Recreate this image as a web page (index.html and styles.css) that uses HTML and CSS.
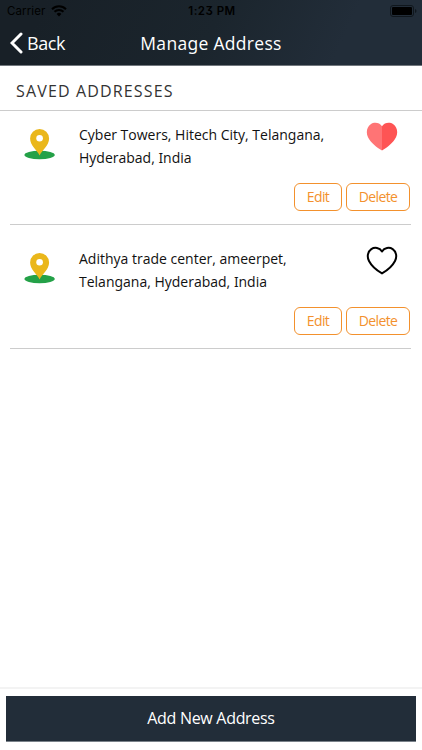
FILE: index.html
```
<!doctype html>
<html lang="en">

<head>
<meta charset="utf-8">
<title>Manage Address</title>
<link rel="stylesheet" href="styles.css">
</head>

<body>

<header class="header">
  <div class="status-bar">
    <div class="carrier">
      <span>Carrier</span>
      <svg class="wifi" width="16" height="12" viewBox="0 0 16 12">
        <path d="M1 4.2a10 10 0 0 1 14 0M3.5 6.8a6.4 6.4 0 0 1 9 0" fill="none" stroke="#000" stroke-width="2"/>
        <path d="M8 11.5 5.6 8.9a3.5 3.5 0 0 1 4.8 0z"/>
      </svg>
    </div>
    <div class="time">1:23 PM</div>
    <svg class="battery" width="27" height="12" viewBox="0 0 27 12">
      <rect x=".5" y=".5" width="23" height="11" rx="2.5" fill="none" stroke="#10171d"/>
      <rect x="2" y="2" width="20" height="8" rx="1"/>
      <path d="M25 4v4q1.5-.5 1.5-2T25 4z" fill="#10171d"/>
    </svg>
  </div>
  <div class="nav">
    <a class="back">
      <svg width="13" height="22" viewBox="0 0 13 22">
        <path d="M11 2 2 11l9 9" fill="none" stroke="#fff" stroke-width="3" stroke-linecap="round"/>
      </svg>
      <span>Back</span>
    </a>
    <h1>Manage Address</h1>
  </div>
</header>

<h2 class="section-title">SAVED ADDRESSES</h2>

<main class="addresses">
  <div class="address">
    <div class="address-info">
      <svg class="pin" width="32" height="32" viewBox="0 0 32 32">
        <ellipse cx="15.6" cy="27" rx="15.2" ry="4.2" fill="#24a148"/>
        <path d="M15.6 27.5C13.4 22.5 6.1 17.5 6.1 10.5a9.5 9.5 0 0 1 19 0C25.1 17.5 17.8 22.5 15.6 27.5z" fill="#eab71b"/>
        <circle cx="15.6" cy="10.3" r="3.3" fill="#fff"/>
      </svg>
      <p>Cyber Towers, Hitech City, Telangana,<br>Hyderabad, India</p>
      <svg class="heart" width="32" height="30" viewBox="0 0 32 30">
        <path d="M16 4.3C13.4.4 8.2-.1 4.7 2.3.8 5-.3 10.7 2 15.3 4.7 20.8 10.8 25.7 16 28.5z" fill="#ff7475"/>
        <path d="M16 4.3C18.6.4 23.8-.1 27.3 2.3 31.2 5 32.3 10.7 30 15.3 27.3 20.8 21.2 25.7 16 28.5z" fill="#fe5454"/>
      </svg>
    </div>
    <div class="actions">
      <button class="edit">Edit</button>
      <button class="delete">Delete</button>
    </div>
  </div>

  <div class="address">
    <div class="address-info">
      <svg class="pin" width="32" height="32" viewBox="0 0 32 32">
        <ellipse cx="15.6" cy="27" rx="15.2" ry="4.2" fill="#24a148"/>
        <path d="M15.6 27.5C13.4 22.5 6.1 17.5 6.1 10.5a9.5 9.5 0 0 1 19 0C25.1 17.5 17.8 22.5 15.6 27.5z" fill="#eab71b"/>
        <circle cx="15.6" cy="10.3" r="3.3" fill="#fff"/>
      </svg>
      <p>Adithya trade center, ameerpet,<br>Telangana, Hyderabad, India</p>
      <svg class="heart" width="32" height="30" viewBox="0 0 32 30">
        <path d="M16 5.4C13.6 1.5 8.6.9 5.3 3.1 1.6 5.6.8 10.8 3 15 5.6 20 10.9 24.5 16 27.4 21.1 24.5 26.4 20 29 15 31.2 10.8 30.4 5.6 26.7 3.1 23.4.9 18.4 1.5 16 5.4z" fill="none" stroke="#000" stroke-width="2" stroke-linejoin="round"/>
      </svg>
    </div>
    <div class="actions">
      <button class="edit">Edit</button>
      <button class="delete">Delete</button>
    </div>
  </div>
</main>

<footer class="footer">
  <button class="add">Add New Address</button>
</footer>

</body>
</html>
```

FILE: styles.css
```
* {
  box-sizing: border-box;
}

body {
  display: flex;
  flex-direction: column;
  height: 750px;
  margin: 0;
  background: #fff;
  color: #111;
  font-family: "Open Sans", "Noto Sans", sans-serif;
  font-feature-settings: "ss01";
  font-size: 14px;
}

button {
  margin: 0;
  padding: 0;
  font: inherit;
  cursor: pointer;
}

.header {
  height: 66px;
  background: linear-gradient(115deg, #182027 10%, #1b252d 50%, #222d39 80%);
  border-bottom: 1px solid #71777d;
  color: #fff;
}

.status-bar {
  display: grid;
  grid-template-columns: 1fr auto 1fr;
  align-items: center;
  height: 22px;
  padding: 0 5px 0 7px;
  color: #000;
  font-family: Inter, sans-serif;
  font-size: 11.5px;
}

.carrier {
  display: flex;
  align-items: center;
  gap: 6px;
  letter-spacing: 0.1px;
}

.time {
  font-size: 11.5px;
  font-weight: 600;
  letter-spacing: 0.5px;
}

.battery {
  justify-self: end;
}

.nav {
  display: grid;
  grid-template-columns: 1fr auto 1fr;
  align-items: center;
  height: 42px;
  padding: 0 10px;
}

.back {
  display: flex;
  align-items: center;
  gap: 4px;
  font-size: 18px;
  letter-spacing: -0.4px;
}

h1 {
  margin: 0;
  font-size: 17.5px;
  font-weight: 500;
  letter-spacing: 0.3px;
}

.section-title {
  height: 45px;
  margin: 0;
  padding-left: 16px;
  border-bottom: 1px solid #ccc;
  color: #333;
  font-size: 16px;
  font-weight: 400;
  line-height: 50px;
  letter-spacing: 1.15px;
}

.addresses {
  flex: 1;
  padding: 0 11px 0 10px;
}

.address {
  height: 124px;
  padding-top: 21px;
  border-bottom: 1px solid #ccc;
}

.address:first-child {
  height: 114px;
  padding-top: 11px;
}

.address-info {
  display: flex;
  height: 61px;
  padding-left: 14px;
}

.pin {
  margin-top: 6px;
}

.address-info p {
  flex: 1;
  margin: 1px 0 0 23px;
  line-height: 23px;
}

.heart {
  margin-right: 13px;
}

.actions {
  display: flex;
  justify-content: flex-end;
  gap: 4px;
  padding-right: 1px;
}

.edit,
.delete {
  width: 48px;
  height: 28px;
  padding-bottom: 1px;
  background: #fff;
  border: 1px solid #f3912d;
  border-radius: 6px;
  color: #f3912d;
  letter-spacing: -0.6px;
}

.delete {
  width: 64px;
}

.footer {
  height: 63px;
  padding: 7px 6px;
  border-top: 2px solid #f3f3f3;
}

.add {
  width: 100%;
  height: 46px;
  padding-bottom: 1px;
  background: #222d39;
  border: 0;
  border-bottom: 1px solid #7a828a;
  color: #fff;
  font-size: 16px;
  letter-spacing: -0.3px;
}
```
